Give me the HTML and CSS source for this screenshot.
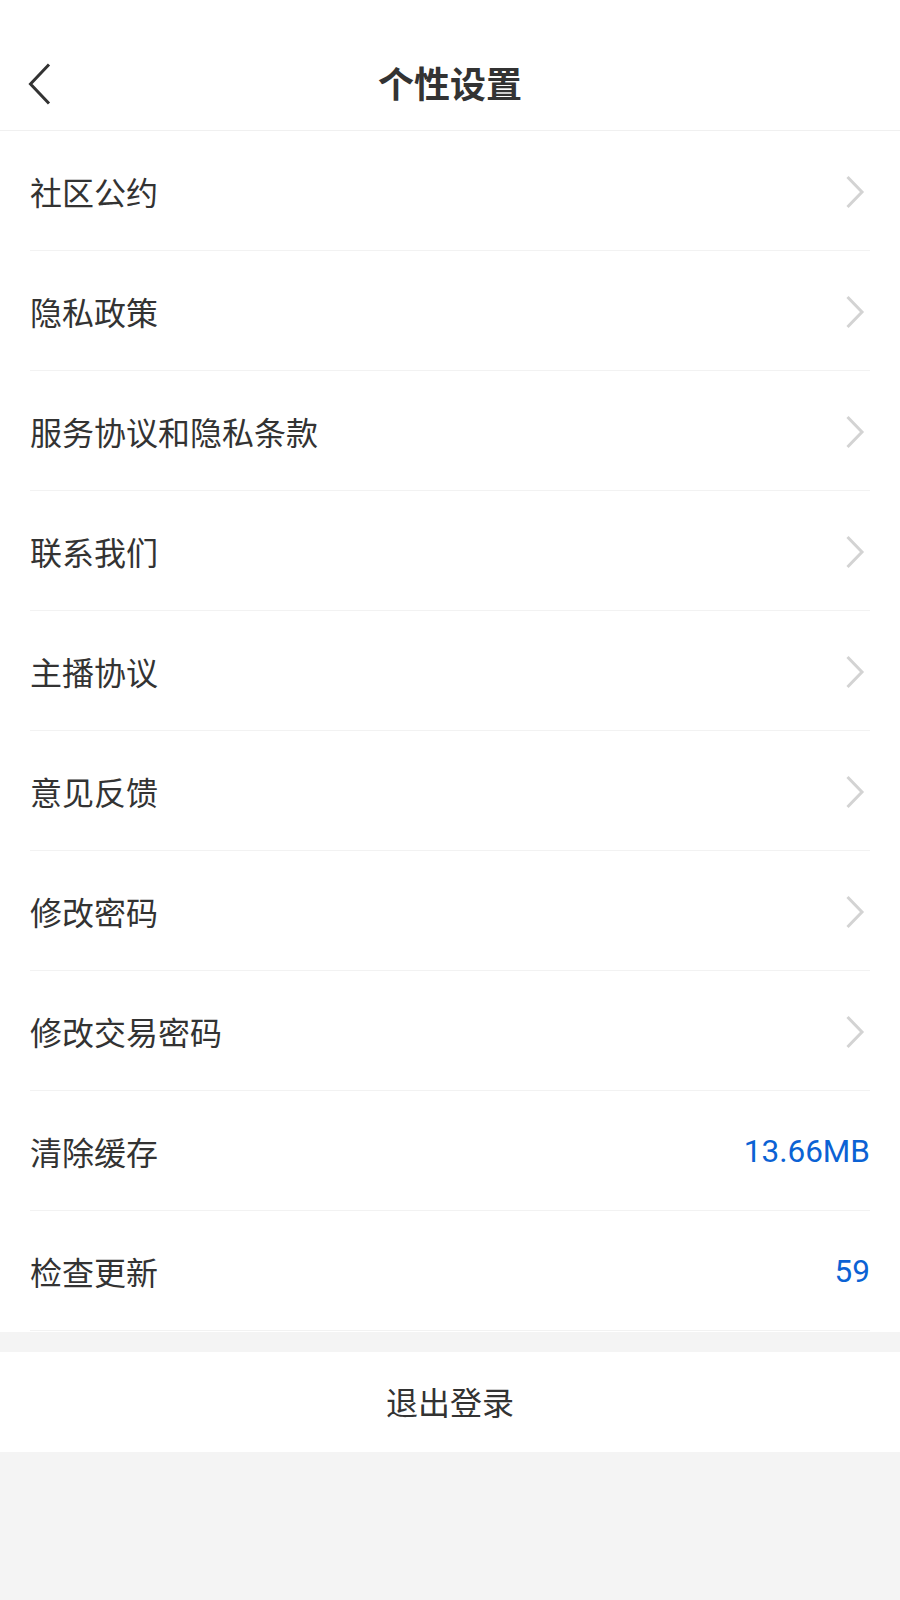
FILE: index.html
```html
<!DOCTYPE html>
<html lang="zh-CN">
<head>
<meta charset="utf-8">
<title>个性设置</title>
<link rel="stylesheet" href="styles.css">
</head>
<body>
<div class="page">
  <header class="nav">
    <span class="back" aria-label="返回">
      <svg width="24" height="42" viewBox="0 0 24 42"><path d="M21 1.5 L2.5 21 L21 40.5" fill="none" stroke="#333" stroke-width="3"/></svg>
    </span>
    <h1 class="title">个性设置</h1>
  </header>
  <ul class="list">
    <li class="row"><span class="label">社区公约</span><svg class="chev" width="20" height="34" viewBox="0 0 20 34"><path d="M2.5 2 L17 17 L2.5 32" fill="none" stroke="#d3d3d3" stroke-width="3"/></svg></li>
    <li class="row"><span class="label">隐私政策</span><svg class="chev" width="20" height="34" viewBox="0 0 20 34"><path d="M2.5 2 L17 17 L2.5 32" fill="none" stroke="#d3d3d3" stroke-width="3"/></svg></li>
    <li class="row"><span class="label">服务协议和隐私条款</span><svg class="chev" width="20" height="34" viewBox="0 0 20 34"><path d="M2.5 2 L17 17 L2.5 32" fill="none" stroke="#d3d3d3" stroke-width="3"/></svg></li>
    <li class="row"><span class="label">联系我们</span><svg class="chev" width="20" height="34" viewBox="0 0 20 34"><path d="M2.5 2 L17 17 L2.5 32" fill="none" stroke="#d3d3d3" stroke-width="3"/></svg></li>
    <li class="row"><span class="label">主播协议</span><svg class="chev" width="20" height="34" viewBox="0 0 20 34"><path d="M2.5 2 L17 17 L2.5 32" fill="none" stroke="#d3d3d3" stroke-width="3"/></svg></li>
    <li class="row"><span class="label">意见反馈</span><svg class="chev" width="20" height="34" viewBox="0 0 20 34"><path d="M2.5 2 L17 17 L2.5 32" fill="none" stroke="#d3d3d3" stroke-width="3"/></svg></li>
    <li class="row"><span class="label">修改密码</span><svg class="chev" width="20" height="34" viewBox="0 0 20 34"><path d="M2.5 2 L17 17 L2.5 32" fill="none" stroke="#d3d3d3" stroke-width="3"/></svg></li>
    <li class="row"><span class="label">修改交易密码</span><svg class="chev" width="20" height="34" viewBox="0 0 20 34"><path d="M2.5 2 L17 17 L2.5 32" fill="none" stroke="#d3d3d3" stroke-width="3"/></svg></li>
    <li class="row"><span class="label">清除缓存</span><span class="value">13.66MB</span></li>
    <li class="row"><span class="label">检查更新</span><span class="value">59</span></li>
  </ul>
  <div class="logout">退出登录</div>
</div>
</body>
</html>
```
FILE: styles.css
```css
html, body {
  margin: 0;
  padding: 0;
  background: #f4f4f4;
}
body {
  font-family: "Noto Sans CJK SC", "Noto Sans", sans-serif;
  color: #333;
}
.page {
  width: 900px;
  min-height: 1600px;
  background: #f4f4f4;
}
.nav {
  position: relative;
  box-sizing: content-box;
  height: 90px;
  padding-top: 40px;
  background: #fff;
  border-bottom: 1px solid #f0f0f0;
  display: flex;
  align-items: center;
  justify-content: center;
}
.back {
  position: absolute;
  left: 28px;
  top: 63px;
  display: block;
  line-height: 0;
}
.title {
  margin: -7px 0 0;
  font-size: 36px;
  font-weight: 700;
  color: #333;
  line-height: 1;
}
.list {
  list-style: none;
  margin: 0;
  padding: 0 30px 1px;
  background: #fff;
}
.row {
  height: 119px;
  border-bottom: 1px solid #f2f2f2;
  display: flex;
  align-items: center;
  justify-content: space-between;
}
.label {
  font-size: 32px;
  line-height: 1;
  color: #333;
}
.chev {
  display: block;
  margin-right: 5px;
  margin-top: 2px;
}
.value {
  font-family: Roboto, "Noto Sans", sans-serif;
  font-size: 31.5px;
  color: #0b62d4;
  line-height: 1;
  margin-top: 2px;
}
.logout {
  margin-top: 20px;
  height: 100px;
  background: #fff;
  display: flex;
  align-items: center;
  justify-content: center;
  font-size: 32px;
  color: #333;
  padding-bottom: 3px;
  box-sizing: border-box;
}
```
